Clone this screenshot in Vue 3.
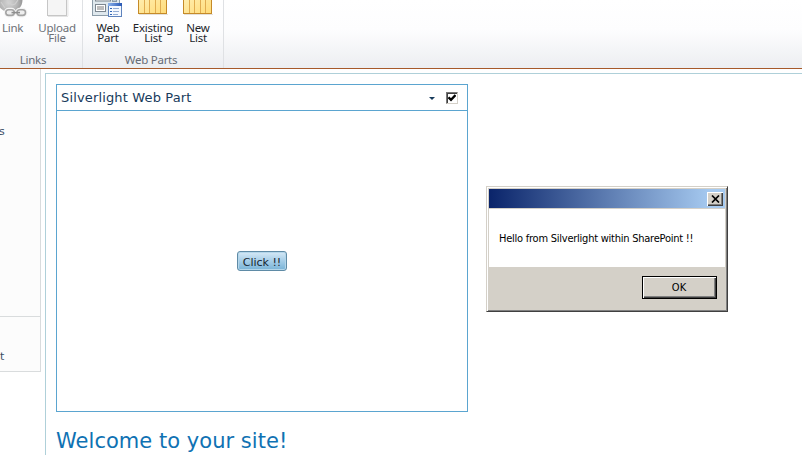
<script setup>
const linkTools = [
  { id: 'link', label: 'Link' },
  { id: 'upload', label: 'Upload\nFile' },
]
const partTools = [
  { id: 'webpart', label: 'Web\nPart' },
  { id: 'existing', label: 'Existing\nList' },
  { id: 'newlist', label: 'New\nList' },
]
</script>

<template>
  <div class="page">
    <header class="ribbon">
      <section class="group links">
        <div class="tools">
          <button v-for="t in linkTools" :key="t.id" class="tool" :class="t.id">
            <svg v-if="t.id === 'link'" class="icon" width="32" height="18" viewBox="0 0 32 18">
              <defs>
                <radialGradient id="globe" cx="0.45" cy="0.6" r="0.55">
                  <stop offset="0" stop-color="#d4d4d4" />
                  <stop offset="0.6" stop-color="#b8b8b8" />
                  <stop offset="1" stop-color="#969696" />
                </radialGradient>
              </defs>
              <circle cx="14" cy="0" r="12.5" fill="url(#globe)" />
              <path d="M11 0l5 5 3-1 3-4M5 2l4 6" fill="none" stroke="#cfcfcf" stroke-width="1.2" />
              <g fill="none" stroke="#f4f4f4" stroke-width="4">
                <rect x="9.800" y="9.800" width="8.500" height="5.600" rx="2.800" />
                <rect x="21" y="9.800" width="8.500" height="5.600" rx="2.800" />
              </g>
              <g fill="#eee" stroke="#a4a4a4" stroke-width="1.600">
                <rect x="9.800" y="9.800" width="8.500" height="5.600" rx="2.800" />
                <rect x="21" y="9.800" width="8.500" height="5.600" rx="2.800" />
              </g>
              <path d="M15.500 12.600h8.500" stroke="#8e8e8e" stroke-width="1.600" />
            </svg>
            <svg v-else class="icon" width="32" height="18" viewBox="0 0 32 18">
              <path d="M7 16.500h20M26.900 0v16" stroke="#e4e4e4" fill="none" />
              <rect x="6.500" y="-3.500" width="19" height="19" fill="#f5f5f5" stroke="#c6c6c6" />
            </svg>
            <span class="label">{{ t.label }}</span>
          </button>
        </div>
        <div class="caption">Links</div>
      </section>
      <section class="group parts">
        <div class="tools">
          <button v-for="t in partTools" :key="t.id" class="tool" :class="t.id">
            <svg v-if="t.id === 'webpart'" class="icon" width="32" height="18" viewBox="0 0 32 18">
              <defs>
                <linearGradient id="titlebar" x1="0" x2="1">
                  <stop offset="0" stop-color="#8db4ec" />
                  <stop offset="1" stop-color="#2857b4" />
                </linearGradient>
              </defs>
              <rect x="0.5" y="-4.5" width="27" height="20" fill="#dfe8ed" stroke="#8c9ca8" />
              <rect x="3.5" y="-3.5" width="15" height="4.500" fill="#f4f4f4" stroke="#7d8790" />
              <rect x="20.5" y="-3.5" width="4" height="5" fill="#b8c8d4" stroke="#8c9ca8" />
              <rect x="3.5" y="4.5" width="10" height="7" fill="#fff" stroke="#7d8790" />
              <rect x="5" y="6" width="7" height="4" fill="#bcbcbc" />
              <rect x="16.500" y="3.500" width="13" height="13" fill="#f5f9ff" stroke="#5e83bd" />
              <rect x="16" y="3" width="14" height="3" fill="url(#titlebar)" />
              <path d="M18 8.500h2M18 11.500h2M18 14.500h2" stroke="#2f66b5" />
              <path d="M21 8.500h6M21 11.500h6M21 14.500h5" stroke="#93add5" />
            </svg>
            <svg v-else class="icon" width="32" height="18" viewBox="0 0 32 18">
              <defs>
                <linearGradient :id="'cols-' + t.id" x1="0" x2="1" y1="0" y2="1">
                  <stop offset="0" stop-color="#fff0b4" />
                  <stop offset="1" stop-color="#ffdb78" />
                </linearGradient>
              </defs>
              <path d="M2 14.500h29" stroke="#e4e0da" />
              <rect x="1.500" y="-4.500" width="28" height="18" :fill="`url(#cols-${t.id})`" stroke="#c58a28" />
              <path d="M7.500 0v13M12.500 0v13M18.500 0v13M23.500 0v13" stroke="#e0ac50" />
            </svg>
            <span class="label">{{ t.label }}</span>
          </button>
        </div>
        <div class="caption">Web Parts</div>
      </section>
    </header>

    <div class="body">
      <nav class="side">
        <div class="side-top"><span>s</span></div>
        <div class="side-bottom"><span>t</span></div>
      </nav>
      <main class="content">
        <section class="webpart-box">
          <div class="wp-head">
            <span class="wp-title">Silverlight Web Part</span>
            <svg class="arrow" width="6" height="4" viewBox="0 0 6 4"><path d="M0 0h6L3 3z" fill="#173b5c" /></svg>
            <span class="check">
              <svg width="8" height="8" viewBox="0 0 8 8"><path d="M0.500 3.300L3 5.800L7.500 1" fill="none" stroke="#000" stroke-width="2.300" /></svg>
            </span>
          </div>
          <div class="wp-body"><button class="click"><span>Click !!</span></button></div>
        </section>
        <h1>Welcome to your site!</h1>
      </main>
    </div>

    <div class="dialog">
      <div class="titlebar">
        <button class="close">
          <svg width="9" height="8" viewBox="0 0 9 8"><path d="M1 0.500L8 7.500M8 0.500L1 7.500" stroke="#000" stroke-width="1.700" /></svg>
        </button>
      </div>
      <div class="message"><span>Hello from Silverlight within SharePoint !!</span></div>
      <div class="actions"><button class="ok"><span>OK</span></button></div>
    </div>
  </div>
</template>

<style>
body { background: #fff; overflow: hidden; }
</style>

<style scoped>
* { box-sizing: border-box; }
button { font: inherit; letter-spacing: inherit; color: inherit; padding: 0; margin: 0; border: 0; background: none; }
svg { display: block; flex: none; }
.page { position: relative; width: 802px; height: 474px; overflow: hidden; background: #fff; font-family: "DejaVu Sans", sans-serif; }
.ribbon { display: flex; height: 69px; border-bottom: 1px solid #a65a2a; background: linear-gradient(#fff 0, #fdfdfe 30px, #eceef1 68px); font-family: "Noto Sans", sans-serif; font-size: 11.5px; letter-spacing: -0.25px; }
.group { height: 68px; border-right: 1px solid #dfe1e4; display: flex; flex-direction: column; }
.links { width: 83px; color: #6c7077; }
.parts { width: 141px; color: #22262b; }
.tools { display: flex; height: 52px; }
.tool { display: flex; flex-direction: column; align-items: center; justify-content: flex-start; white-space: nowrap; }
.icon { margin-bottom: 5px; }
.label { line-height: 10px; white-space: pre; text-align: center; }
.link { width: 32px; margin-left: -4px; }
.link .label { align-self: flex-start; padding-left: 6px; }
.upload { width: 40px; margin-left: 9px; }
.parts .webpart { width: 40px; margin-left: 5px; }
.parts .existing { width: 44px; margin-left: 3px; }
.parts .newlist { width: 40px; margin-left: 3px; }
.caption { height: 15px; line-height: 15px; text-align: center; color: #666c76; }
.links .caption { padding-right: 16px; }
.parts .caption { padding-right: 4px; }
.body { display: flex; height: 386px; }
.side { width: 41px; height: 303px; border-right: 1px solid #d9dcdd; border-bottom: 1px solid #d9dcdd; background: #fcfcfc; color: #3b4f65; font-size: 11px; line-height: 14px; }
.side-top { height: 248px; padding-top: 56px; border-bottom: 1px solid #d9dcdd; }
.side-bottom { padding: 33px 0 0 1px; }
.side span { display: block; margin-left: -1px; }
.content { flex: 1; margin: 4px 0 0 4px; padding: 10px 0 0 10px; border-top: 1px solid #afd0d9; border-left: 1px solid #afd0d9; }
.webpart-box { width: 412px; height: 328px; border: 1px solid #5ba5d0; }
.wp-head { display: flex; align-items: center; height: 26px; padding: 0 9px 0 4px; border-bottom: 1px solid #5ba5d0; }
.wp-title { flex: 1; color: #173b5c; font-size: 13px; line-height: 24px; letter-spacing: 0.15px; white-space: nowrap; }
.arrow { margin: 3px 11px 0 0; }
.check { display: flex; align-items: center; justify-content: center; width: 12px; height: 12px; background: #fff; border: 1px solid; border-color: #777 #d4d0c8 #d4d0c8 #777; box-shadow: inset 1px 1px #404040; }
.wp-body { display: flex; justify-content: center; padding-top: 140px; }
.click { width: 50px; height: 20px; padding-top: 1px; border: 1px solid #5f8ba6; border-radius: 3px; background: linear-gradient(#d6e9f6, #aad0e9 45%, #78b3d7); box-shadow: inset 0 0 0 1px #b4d6ea; color: #162530; font-size: 11px; line-height: 18px; white-space: nowrap; }
.click span { display: block; margin-top: 1px; }
h1 { margin: 15px 0 0; font-size: 21px; line-height: 28px; font-weight: 400; letter-spacing: 0.03px; color: #0f72b3; white-space: nowrap; }
.dialog { position: absolute; left: 486px; top: 186px; width: 242px; height: 126px; padding: 1px; background: #d4d0c8; border: 1px solid; border-color: #d4d0c8 #404040 #404040 #d4d0c8; box-shadow: inset 1px 1px #fff, inset -1px -1px #808080; font-family: "DejaVu Sans Condensed", "DejaVu Sans", sans-serif; font-size: 11px; color: #000; }
.titlebar { display: flex; justify-content: flex-end; align-items: center; height: 19px; margin: 1px 1px 0; padding-right: 2px; background: linear-gradient(90deg, #0a246a, #a6caf0 94%); }
.close { display: flex; align-items: center; justify-content: center; width: 16px; height: 14px; background: #d4d0c8; box-shadow: inset 1px 1px #fff, inset -1px -1px #404040, inset -2px -2px #808080; }
.message { height: 58px; margin: 1px 1px 0; padding-left: 10px; line-height: 60px; letter-spacing: -0.24px; background: #fff; white-space: nowrap; }
.actions { display: flex; justify-content: flex-end; padding: 9px 9px 0; }
.ok { width: 75px; height: 23px; border: 1px solid #000; background: #d4d0c8; box-shadow: inset 1px 1px #fff, inset -1px -1px #404040, inset -2px -2px #808080; line-height: 20px; }
.ok span { display: block; padding-right: 1px; }
</style>
